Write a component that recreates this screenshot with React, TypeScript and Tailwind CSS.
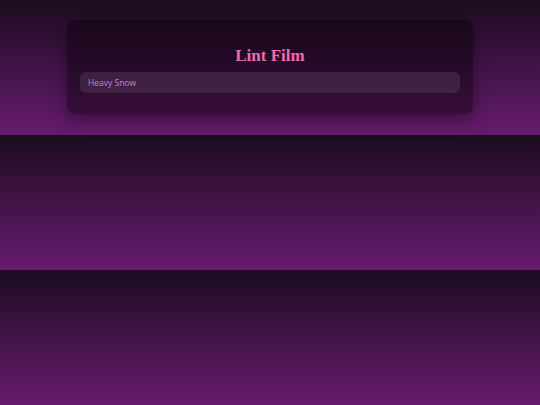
import React, { useState } from 'react';

const App: React.FC = () => {
  const [weather, setWeather] = useState('Heavy Snow');

  return (
    <div className="min-h-screen bg-[linear-gradient(to_bottom,#1c0c1f,#661b6f)] bg-[length:100%_135px] bg-repeat">
      <div className="pt-5 pb-[21px] px-[67px]">
        {/* Card */}
        <div className="rounded-lg bg-black/40 shadow-[0_6px_16px_rgba(0,0,0,0.35)] px-[13px] pt-6 pb-[21px]">
          <h1 className="text-center text-[17px] leading-6 font-bold text-[#ec6dae] font-['Liberation_Serif',serif]">
            Lint Film
          </h1>
          <input
            value={weather}
            onChange={(e) => setWeather(e.target.value)}
            className="w-full h-[21px] rounded-md bg-white/[0.09] px-2 text-[8.5px] text-[#c283d8] font-['Open_Sans',sans-serif] outline-none"
          />
        </div>
      </div>
    </div>
  );
};

export default App;
